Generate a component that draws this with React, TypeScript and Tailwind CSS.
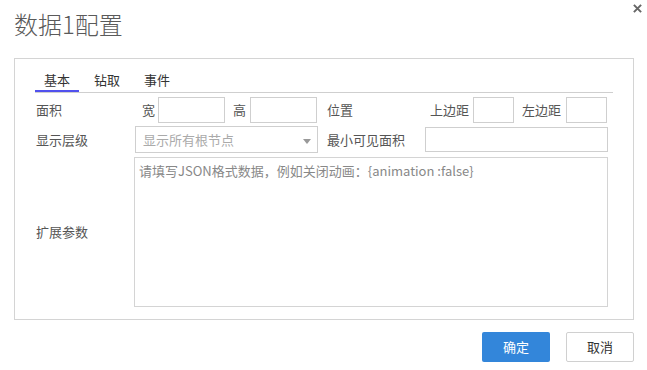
import { useState } from 'react';

const font = { fontFamily: '"Noto Sans CJK SC", "Noto Sans", sans-serif' };

function Tabs() {
  const [active, setActive] = useState(0);
  const tabs = ['基本', '钻取', '事件'];
  return (
    <div className="flex gap-[6px] border-b border-[#cfcfcf] h-[25px]">
      {tabs.map((t, i) => (
        <button
          key={t}
          onClick={() => setActive(i)}
          className="relative w-[44px] h-[24px] text-[13px] leading-[24px] text-[#333] text-center"
        >
          {t}
          {active === i && <span className="absolute left-0 right-0 bottom-0 h-[2px] bg-[#5151ee]" />}
        </button>
      ))}
    </div>
  );
}

export default function App() {
  return (
    <div className="relative w-[647px] h-[370px] bg-white text-[#555]" style={font}>
      <button className="absolute top-[2px] right-[4px] w-[12px] h-[12px] flex items-center justify-center text-[#666]">
        <svg viewBox="0 0 10 10" className="w-[9px] h-[9px]">
          <path d="M1 1L9 9M9 1L1 9" stroke="currentColor" strokeWidth="2.2" />
        </svg>
      </button>

      <div className="pt-[8px] pl-[14px] h-[40px] text-[24px] leading-[32px] font-light text-[#5a5a5a]">数据1配置</div>

      <div className="mt-[18px] ml-[14px] w-[620px] h-[262px] border border-[#d4d4d4] pt-[9px] pl-[20px] pr-[20px]">
        <Tabs />

        <div className="mt-[4px] flex items-center h-[26px] text-[13px]">
          <div className="w-[99px] pl-[1px]">面积</div>
          <span className="ml-[8px]">宽</span>
          <input className="ml-[3px] w-[67px] h-[26px] border border-[#cfcfcf] outline-none" />
          <span className="ml-[8px]">高</span>
          <input className="ml-[4px] w-[67px] h-[26px] border border-[#cfcfcf] outline-none" />
          <span className="ml-[10px] w-[103px]">位置</span>
          <span>上边距</span>
          <input className="ml-[4px] w-[41px] h-[26px] border border-[#cfcfcf] outline-none" />
          <span className="ml-[8px]">左边距</span>
          <input className="ml-[5px] w-[41px] h-[26px] border border-[#cfcfcf] outline-none" />
        </div>

        <div className="mt-[3px] flex items-center h-[27px] text-[13px]">
          <div className="w-[100px] pl-[1px]">显示层级</div>
          <div className="relative w-[183px] h-[27px] border border-[#cfcfcf] flex items-center pl-[7px] text-[#aaa]">
            显示所有根节点
            <svg viewBox="0 0 8 5" className="absolute right-[6px] top-[12px] w-[8px] h-[5px]">
              <path d="M0 0H8L4 5Z" fill="#999" />
            </svg>
          </div>
          <span className="ml-[9px] w-[98px]">最小可见面积</span>
          <input className="w-[183px] h-[25px] border border-[#cfcfcf] outline-none" />
        </div>

        <div className="mt-[4px] flex items-center text-[13px]">
          <div className="w-[99px] pl-[1px]">扩展参数</div>
          <textarea
            className="w-[474px] h-[150px] border border-[#d4d4d4] outline-none resize-none px-[4px] py-[3px] leading-[20px] text-[13px] placeholder:text-[#888]"
            placeholder="请填写JSON格式数据，例如关闭动画：{animation :false}"
          />
        </div>
      </div>

      <div className="mt-[12px] mr-[13px] flex justify-end gap-[16px] text-[13px]">
        <button className="w-[68px] h-[30px] rounded-[2px] bg-[#3386da] text-white">确定</button>
        <button className="w-[68px] h-[30px] rounded-[2px] border border-[#d0d0d0] bg-white text-[#333]">取消</button>
      </div>
    </div>
  );
}
